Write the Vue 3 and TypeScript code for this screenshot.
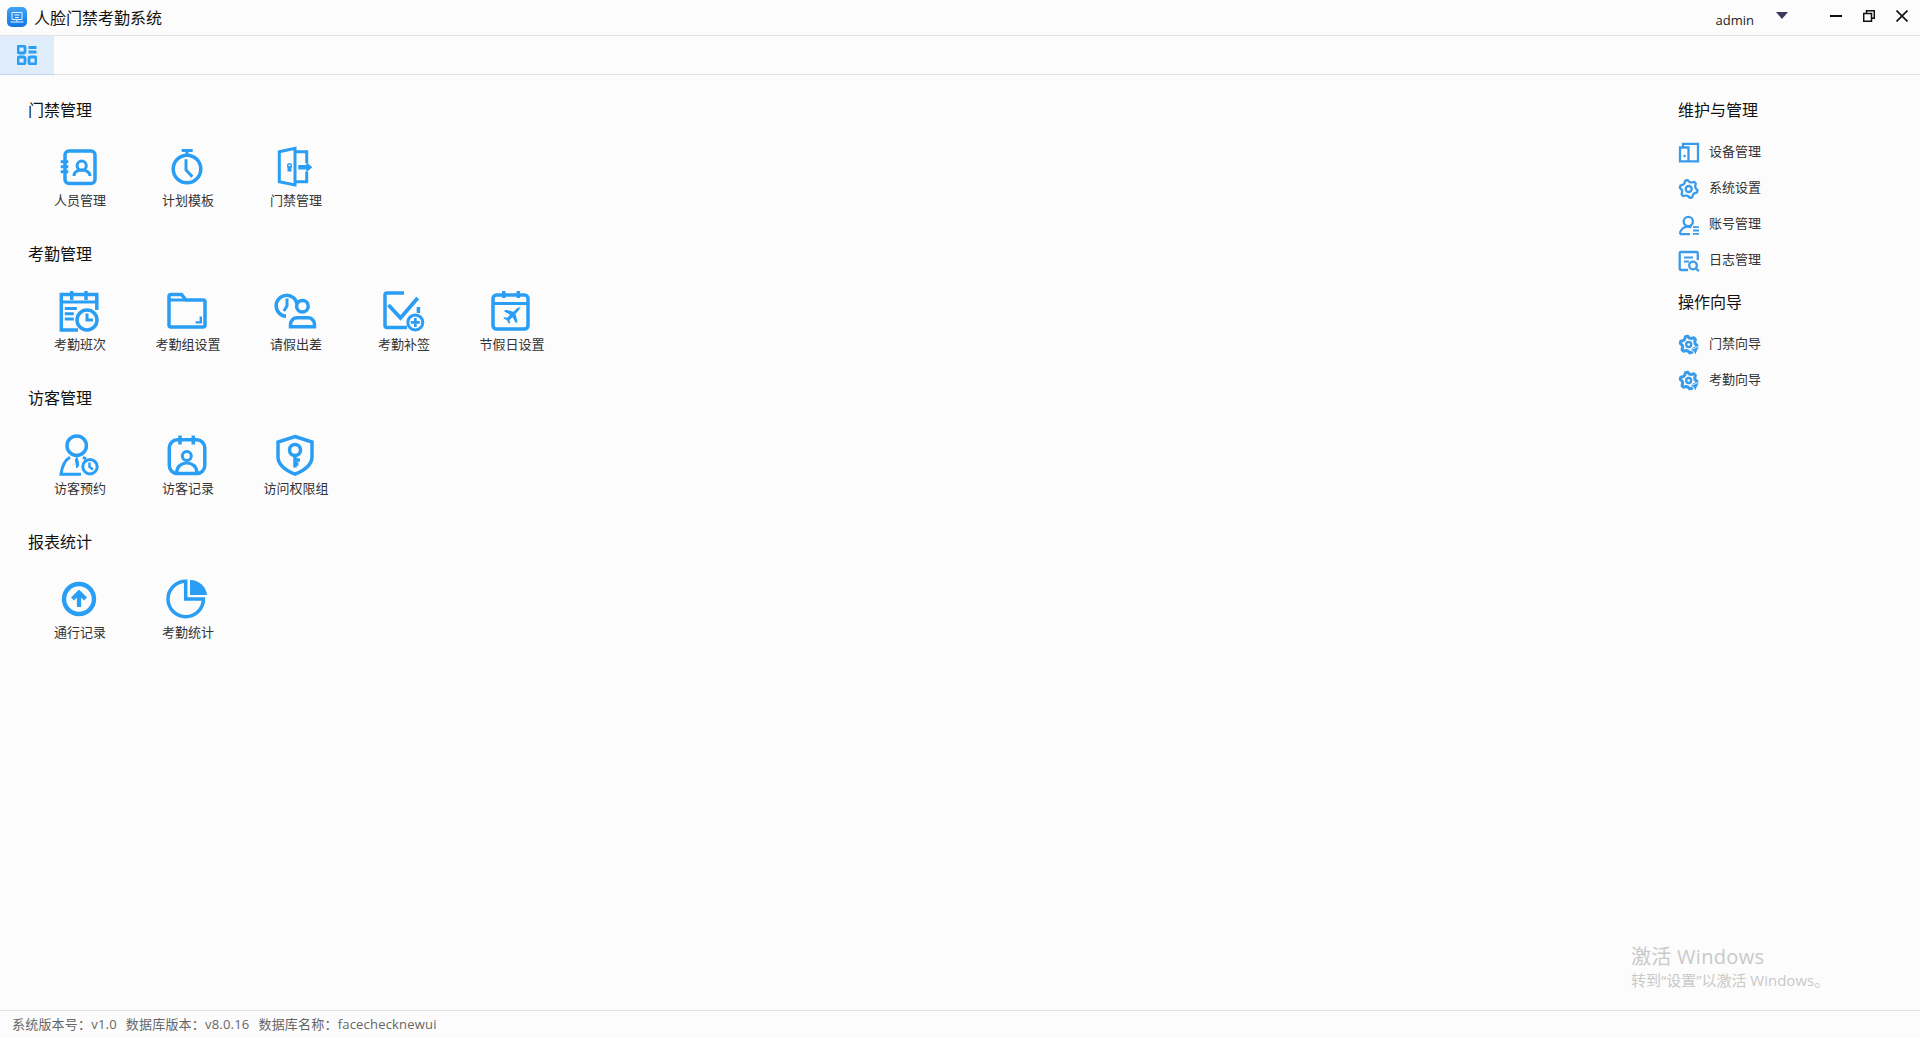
<script setup lang="ts">
type Entry = { label: string; icon: string };
type Group = { title: string; items: Entry[] };

// 6 tooth gear outline, used by the small settings and guide icons
function gear(cx: number, cy: number, r1: number, r2: number): string {
  const pts: string[] = [];
  for (let i = 0; i < 24; i++) {
    const phase = i % 4;
    const r = phase === 0 || phase === 1 ? r1 : r2;
    const a = (i * Math.PI) / 12 + Math.PI / 24;
    pts.push(`${(cx + r * Math.cos(a)).toFixed(1)} ${(cy + r * Math.sin(a)).toFixed(1)}`);
  }
  return "M" + pts.join("L") + "Z";
}

const icons: Record<string, string> = {
  people: `<rect x="7" y="6" width="30" height="32.5" rx="4"/><path d="M2.700 16.700h7.600M2.700 21.700h7.600M2.700 26.700h7.600" stroke-width="3"/><circle cx="23.700" cy="20.700" r="4.600" stroke-width="3"/><path d="M16 31c0-3.800 3.500-6 7.700-6s8.300 2.200 8.300 6" stroke-width="3"/>`,
  clock: `<circle cx="21" cy="24" r="13.800"/><path d="M15.700 5.500h11M21 5.500v5M20 14.300V25l6.300 6.700" stroke-width="3"/>`,
  door: `<path d="M5.300 6.700 21 3.300V40L5.300 36.700Z" stroke-width="3"/><path d="M21 6.700h11.700v11.600M32.700 26.700v10H21" stroke-width="3"/><rect x="13.500" y="21" width="4" height="5.500" fill="#2a9df4" stroke="none"/><circle cx="15.500" cy="20.500" r="1.800" stroke-width="1.400"/><path d="M24.300 20h8v-3l6 5.300-6 5.300v-3h-8Z" fill="#2a9df4" stroke="none"/>`,
  shift: `<g transform="translate(0 -2)"><path d="M20 43H3.300V7.500h35.500V23"/><path d="M3.300 15h35.500" stroke-width="3"/><path d="M13.700 4v9M28 4v9"/><path d="M6.800 21.600h12M6.800 26.800h9M6.800 32h9" stroke-width="3"/><circle cx="29" cy="33" r="10" fill="#fcfcfc"/><path d="M29 26.500V33h6" stroke-width="3"/></g>`,
  folder: `<g transform="translate(0 -2)"><path d="M3 9.500c0-1.200.8-2 2-2h10.500l4.500 5.500h17c1.200 0 2 .8 2 2V38c0 1.200-.8 2-2 2H5c-1.200 0-2-.8-2-2Z"/><path d="M3 13h17" stroke-width="3"/><path d="M29.600 35.400h5.200v-5.900" stroke-width="2.400"/></g>`,
  leave: `<g transform="translate(0 -2)"><path d="M23 17A10.500 10.500 0 1 0 12 29.300"/><path d="M13 11.500v7.500l-3.200 5" stroke-width="3"/><circle cx="28.400" cy="19.200" r="5.800"/><path d="M16.500 39.700v-2.400a6.500 6.500 0 0 1 6.500-6.500h11a6.500 6.500 0 0 1 6.500 6.500v2.400Z"/></g>`,
  supplement: `<g transform="translate(0 -2)"><path d="M22 6H5c-1.200 0-2 .8-2 2v30.500c0 1.200.8 2 2 2h20"/><path d="M6.500 18 18.500 31 35.700 11" stroke-width="3.800"/><path d="M36.400 20v6"/><circle cx="33.300" cy="35.400" r="7.500" fill="#fcfcfc" stroke-width="3"/><path d="M33.300 31v9M28.800 35.400h9" stroke-width="2.800"/></g>`,
  holiday: `<g transform="translate(0 -2)"><rect x="3" y="8" width="35" height="34" rx="3.500"/><path d="M3 16.400h35" stroke-width="3"/><path d="M13.800 4v7M28.300 4v7"/><path d="M31 20.500c-1.500-.8-3.500.2-5 1.700l-2.500 2.500-8-2-1.500 1.500 6 3.500-2.700 3-3-.5-1 1 3.700 2 2 3.700 1-1-.5-3 3-2.700 3.500 6 1.500-1.500-2-8 2.500-2.500c1.500-1.500 2.500-3.500 1.500-5.500Z" fill="#2a9df4" stroke="none"/></g>`,
  visitor: `<circle cx="18.700" cy="12.700" r="9.700"/><path d="M12 24.300C7 27 4 34 3 41.300h20M25 24.300l3 1.700" stroke-width="3"/><path d="M18.700 24l-1.200 3 1.200 8 2-2.500-.8-5.500Z" fill="#2a9df4" stroke="#2a9df4" stroke-width="1"/><circle cx="32" cy="33.700" r="7.200" fill="#fcfcfc" stroke-width="3"/><path d="M31.500 29.500v4.500l3.500 2.500" stroke-width="2.400"/>`,
  record: `<rect x="3.300" y="6.800" width="35.500" height="33.700" rx="8"/><path d="M14 2.500v9M27.300 2.500v9"/><circle cx="20.800" cy="23" r="4.500" stroke-width="3"/><path d="M10.800 39c0-5.300 4.500-9 10-9s10 3.700 10 9" stroke-width="3.200"/>`,
  shield: `<path d="M21 3.500 38 9v15c0 8-8 13.500-17 17.200C12 37.500 4 32 4 24V9Z"/><circle cx="21" cy="17" r="5.500"/><path d="M21 22.500v12M21 27h5M21 31h3.500"/>`,
  upload: `<circle cx="21" cy="22" r="15" stroke-width="4.400"/><path d="M21 30V15.500M14.500 22 21 15.500 27.500 22" stroke-width="4.200"/>`,
  pie: `<path d="M19.700 4.300A17.700 17.700 0 1 0 37.400 22H19.700Z"/><path d="M24 18V3A17 17 0 0 1 41 18Z" fill="#2a9df4" stroke="none"/>`,
};

const smallIcons: Record<string, string> = {
  device: `<path d="M3 4.500V1.800h15v17.500H0V5.500h8.500v13.800"/><circle cx="4.500" cy="14" r="1.300" fill="#3a9bea" stroke="none"/>`,
  settings: `<path d="${gear(8.7, 11, 9, 7)}" stroke-linejoin="round"/><circle cx="8.700" cy="11" r="3"/>`,
  account: `<circle cx="8.300" cy="7.500" r="4.600"/><path d="M0 20.200c0-4.500 3.500-7.500 8-7.500 1.400 0 2.500.2 3.500.7M0 20.200h10"/><path d="M13 13.200h6M13 16.500h6M13 19.800h6" stroke-width="1.800"/>`,
  log: `<path d="M8 20H1c-.8 0-1.300-.5-1.300-1.300V3.300C-.3 2.500.2 2 1 2h15.500c.8 0 1.300.5 1.300 1.300V10"/><path d="M4 7.500h9M4 11.500h5" stroke-width="1.800"/><circle cx="13" cy="15.500" r="3.800"/><path d="m15.800 18.300 3 3"/>`,
  guide: `<path d="${gear(8.7, 10.5, 8.5, 6.5)}" stroke-linejoin="round" stroke-width="3"/><circle cx="8.700" cy="10.500" r="2.500" stroke-width="2.400"/><path d="M19.500 12 9.500 16l4 1.300 1.700 4Z" fill="#3a9bea" stroke="#fcfcfc" stroke-width=".8"/>`,
};

const groups: Group[] = [
  {
    title: "门禁管理",
    items: [
      { label: "人员管理", icon: "people" },
      { label: "计划模板", icon: "clock" },
      { label: "门禁管理", icon: "door" },
    ],
  },
  {
    title: "考勤管理",
    items: [
      { label: "考勤班次", icon: "shift" },
      { label: "考勤组设置", icon: "folder" },
      { label: "请假出差", icon: "leave" },
      { label: "考勤补签", icon: "supplement" },
      { label: "节假日设置", icon: "holiday" },
    ],
  },
  {
    title: "访客管理",
    items: [
      { label: "访客预约", icon: "visitor" },
      { label: "访客记录", icon: "record" },
      { label: "访问权限组", icon: "shield" },
    ],
  },
  {
    title: "报表统计",
    items: [
      { label: "通行记录", icon: "upload" },
      { label: "考勤统计", icon: "pie" },
    ],
  },
];

const sideGroups: Group[] = [
  {
    title: "维护与管理",
    items: [
      { label: "设备管理", icon: "device" },
      { label: "系统设置", icon: "settings" },
      { label: "账号管理", icon: "account" },
      { label: "日志管理", icon: "log" },
    ],
  },
  {
    title: "操作向导",
    items: [
      { label: "门禁向导", icon: "guide" },
      { label: "考勤向导", icon: "guide" },
    ],
  },
];
</script>

<template>
  <div class="app">
    <header class="titlebar">
      <svg class="logo" viewBox="0 0 20 20">
        <defs>
          <linearGradient id="logoBg" x1="0" y1="0" x2="0" y2="1">
            <stop offset="0" stop-color="#3fa4f5" />
            <stop offset="1" stop-color="#1275e6" />
          </linearGradient>
        </defs>
        <rect width="20" height="20" rx="5" fill="url(#logoBg)" />
        <path d="M5 5.500h10v7H5ZM3.500 15h13M10 12.500V15M7.500 8h5M8 10.500h4" fill="none" stroke="#e8f4ff" stroke-width="1" />
      </svg>
      <span class="app-name">人脸门禁考勤系统</span>
      <span class="user">admin</span>
      <span class="caret"></span>
      <svg class="win-btn min" viewBox="0 0 12 12"><path d="M0 6h12" /></svg>
      <svg class="win-btn restore" viewBox="0 0 12 12"><path d="M3.500 3V.7h7.800v7.600H8.500M.7 3.500h7.800v7.800H.7Z" /></svg>
      <svg class="win-btn close" viewBox="0 0 12 12"><path d="m.5.500 11 11M11.500.500l-11 11" /></svg>
    </header>

    <nav class="tabs">
      <div class="tab">
        <svg viewBox="0 0 20 20">
          <rect x="1" y="1" width="7" height="7" rx="1.500" />
          <rect x="1" y="12" width="7" height="7" rx="1.500" />
          <rect x="12" y="12" width="7" height="7" rx="1.500" />
          <path d="M11.500 2.500h8M11.500 7h8" />
        </svg>
      </div>
    </nav>

    <main class="main">
      <div class="left">
        <section v-for="g in groups" :key="g.title" class="group">
          <h2 class="group-title">{{ g.title }}</h2>
          <div class="grid">
            <div v-for="item in g.items" :key="item.label" class="entry">
              <svg class="big-icon" viewBox="0 0 46 46" v-html="icons[item.icon]"></svg>
              <span class="entry-label">{{ item.label }}</span>
            </div>
          </div>
        </section>
      </div>

      <aside class="side">
        <section v-for="g in sideGroups" :key="g.title" class="side-group">
          <h2 class="side-title">{{ g.title }}</h2>
          <ul class="side-list">
            <li v-for="item in g.items" :key="item.label" class="side-row">
              <svg class="small-icon" viewBox="0 0 20 20" v-html="smallIcons[item.icon]"></svg>
              <span class="side-label">{{ item.label }}</span>
            </li>
          </ul>
        </section>
      </aside>
    </main>

    <footer class="status">
      <span>系统版本号：v1.0</span>
      <span>数据库版本：v8.0.16</span>
      <span>数据库名称：facechecknewui</span>
    </footer>

    <div class="watermark">
      <div class="wm-big">激活 Windows</div>
      <div class="wm-small">转到“设置”以激活 Windows。</div>
    </div>
  </div>
</template>

<style scoped>
.app {
  position: relative;
  display: flex;
  flex-direction: column;
  height: 1038px;
  overflow: hidden;
  background: #fcfcfc;
  color: #222;
  font-family: "Open Sans", "Noto Sans CJK SC", sans-serif;
}

.titlebar {
  display: flex;
  align-items: center;
  flex: none;
  height: 35px;
  border-bottom: 1px solid #e2e2e2;
  padding-left: 7px;
}

.logo {
  width: 20px;
  height: 20px;
  margin-bottom: 2px;
}

.app-name {
  margin-left: 7px;
  margin-bottom: 2px;
  font-size: 16px;
  color: #111;
}

.user {
  margin-left: auto;
  font-size: 13px;
  margin-top: 4px;
  color: #222;
}

.caret {
  margin-left: 22px;
  border-left: 6px solid transparent;
  border-right: 6px solid transparent;
  border-top: 7px solid #3b3a5c;
  margin-bottom: 4px;
}

.win-btn {
  width: 12px;
  height: 12px;
  fill: none;
  stroke: #111;
  margin-bottom: 4px;
}

.min {
  margin-left: 42px;
  stroke-width: 2;
}

.restore {
  margin-left: 21px;
  stroke-width: 1.500;
}

.close {
  margin-left: 21px;
  margin-right: 12px;
  stroke-width: 1.600;
}

.tabs {
  flex: none;
  height: 38px;
  border-bottom: 1px solid #e2e2e2;
}

.tab {
  display: flex;
  align-items: center;
  justify-content: center;
  width: 54px;
  height: 38px;
  background: #deedf9;
  border-bottom: 1px solid #bcd6ec;
}

.tab svg {
  width: 20px;
  height: 20px;
  fill: none;
  stroke: #2a9df4;
  stroke-width: 2.800;
}

.main {
  flex: 1;
  display: flex;
  justify-content: space-between;
  padding-top: 23px;
}

.left {
  padding-left: 26px;
}

.group {
  height: 144px;
}

.group-title,
.side-title {
  margin: 0;
  font-size: 16px;
  font-weight: 400;
  line-height: 24px;
  color: #111;
}

.group-title {
  margin-left: 2px;
}

.grid {
  display: flex;
  margin-top: 23px;
}

.entry {
  display: flex;
  flex-direction: column;
  align-items: center;
  width: 108px;
}

.big-icon {
  width: 46px;
  height: 46px;
  margin-left: 1px;
  margin-right: -1px;
  overflow: visible;
  fill: none;
  stroke: #2a9df4;
  stroke-width: 3.500;
}

.entry-label {
  font-size: 13px;
  line-height: 18px;
  color: #333;
}

.side {
  width: 242px;
  flex: none;
}

.side-group {
  margin-bottom: 12px;
}

.side-list {
  list-style: none;
  margin: 12px 0 0;
  padding: 0;
}

.side-row {
  display: flex;
  align-items: center;
  gap: 9px;
  height: 36px;
  font-size: 13px;
  color: #333;
}

.side-label {
  margin-top: -3px;
}

.small-icon {
  width: 20px;
  height: 20px;
  margin-left: 2px;
  overflow: visible;
  fill: none;
  stroke: #3a9bea;
  stroke-width: 2.300;
}

.status {
  flex: none;
  display: flex;
  gap: 9px;
  align-items: center;
  height: 25px;
  padding-left: 12px;
  padding-bottom: 2px;
  border-top: 1px solid #e2e2e2;
  font-size: 13px;
  letter-spacing: 0.2px;
  color: #666;
}

.watermark {
  position: absolute;
  left: 1631px;
  top: 943px;
  color: #c9c9c9;
}

.wm-big {
  font-size: 20px;
  letter-spacing: 0.3px;
  line-height: 28px;
}

.wm-small {
  font-size: 15px;
  line-height: 18px;
}
</style>
